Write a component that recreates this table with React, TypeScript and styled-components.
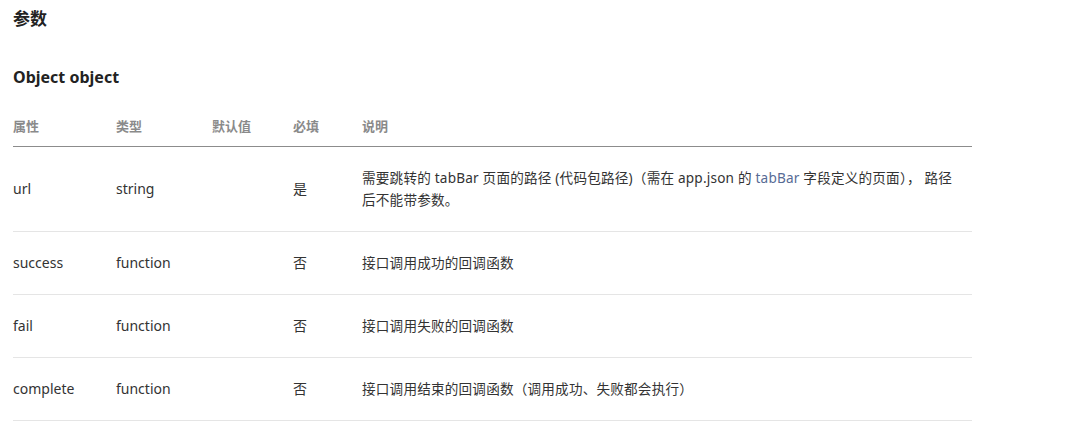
import React, { ReactElement } from 'react';
import styled, { createGlobalStyle } from 'styled-components';

const GlobalStyle = createGlobalStyle`
  body {
    margin: 0;
    background: #fff;
    font-family: "Segoe UI", "Noto Sans", "Noto Sans CJK SC", sans-serif;
    color: #333;
  }
`;

const Page = styled.div`
  padding: 6px 13px 0;
  width: 959px;
`;

const Title = styled.h2`
  margin: 0;
  font-size: 17px;
  line-height: 26px;
  font-weight: 700;
  color: #222;
`;

const SubTitle = styled.h3`
  margin: 33px 0 0;
  font-size: 16px;
  line-height: 24px;
  font-weight: 700;
  color: #222;
`;

const Table = styled.table`
  margin-top: 15px;
  width: 100%;
  border-collapse: collapse;
  table-layout: fixed;
`;

const HeadCell = styled.th<{ $w?: number }>`
  width: ${(p) => (p.$w ? `${p.$w}px` : 'auto')};
  text-align: left;
  font-size: 13px;
  font-weight: 700;
  color: #8a8a8a;
  line-height: 20px;
  padding: 12px 0 10px;
  border-bottom: 1px solid #8c8c8c;
`;

const Row = styled.tr`
  border-bottom: 1px solid #e5e5e5;
`;

const Cell = styled.td`
  font-size: 14px;
  line-height: 22px;
  padding: 20px 0;
  vertical-align: middle;
  color: #333;
`;

const DescCell = styled(Cell)`
  font-size: 13.6px;
  letter-spacing: 0.2px;
  padding-right: 10px;
`;

const Link = styled.span`
  color: #576b95;
`;

interface Param {
  name: string;
  type: string;
  def: string;
  required: string;
  desc: React.ReactNode;
}

const params: Param[] = [
  {
    name: 'url',
    type: 'string',
    def: '',
    required: '是',
    desc: (
      <>
        需要跳转的 tabBar 页面的路径 (代码包路径)（需在 app.json 的 <Link>tabBar</Link> 字段定义的页面）， 路径后不能带参数。
      </>
    ),
  },
  { name: 'success', type: 'function', def: '', required: '否', desc: '接口调用成功的回调函数' },
  { name: 'fail', type: 'function', def: '', required: '否', desc: '接口调用失败的回调函数' },
  {
    name: 'complete',
    type: 'function',
    def: '',
    required: '否',
    desc: '接口调用结束的回调函数（调用成功、失败都会执行）',
  },
];

function App(): ReactElement {
  return (
    <Page>
      <GlobalStyle />
      <Title>参数</Title>
      <SubTitle>Object object</SubTitle>
      <Table>
        <thead>
          <tr>
            <HeadCell $w={103}>属性</HeadCell>
            <HeadCell $w={96}>类型</HeadCell>
            <HeadCell $w={81}>默认值</HeadCell>
            <HeadCell $w={69}>必填</HeadCell>
            <HeadCell>说明</HeadCell>
          </tr>
        </thead>
        <tbody>
          {params.map((p) => (
            <Row key={p.name}>
              <Cell>{p.name}</Cell>
              <Cell>{p.type}</Cell>
              <Cell>{p.def}</Cell>
              <Cell>{p.required}</Cell>
              <DescCell>{p.desc}</DescCell>
            </Row>
          ))}
        </tbody>
      </Table>
    </Page>
  );
}

export default App;
